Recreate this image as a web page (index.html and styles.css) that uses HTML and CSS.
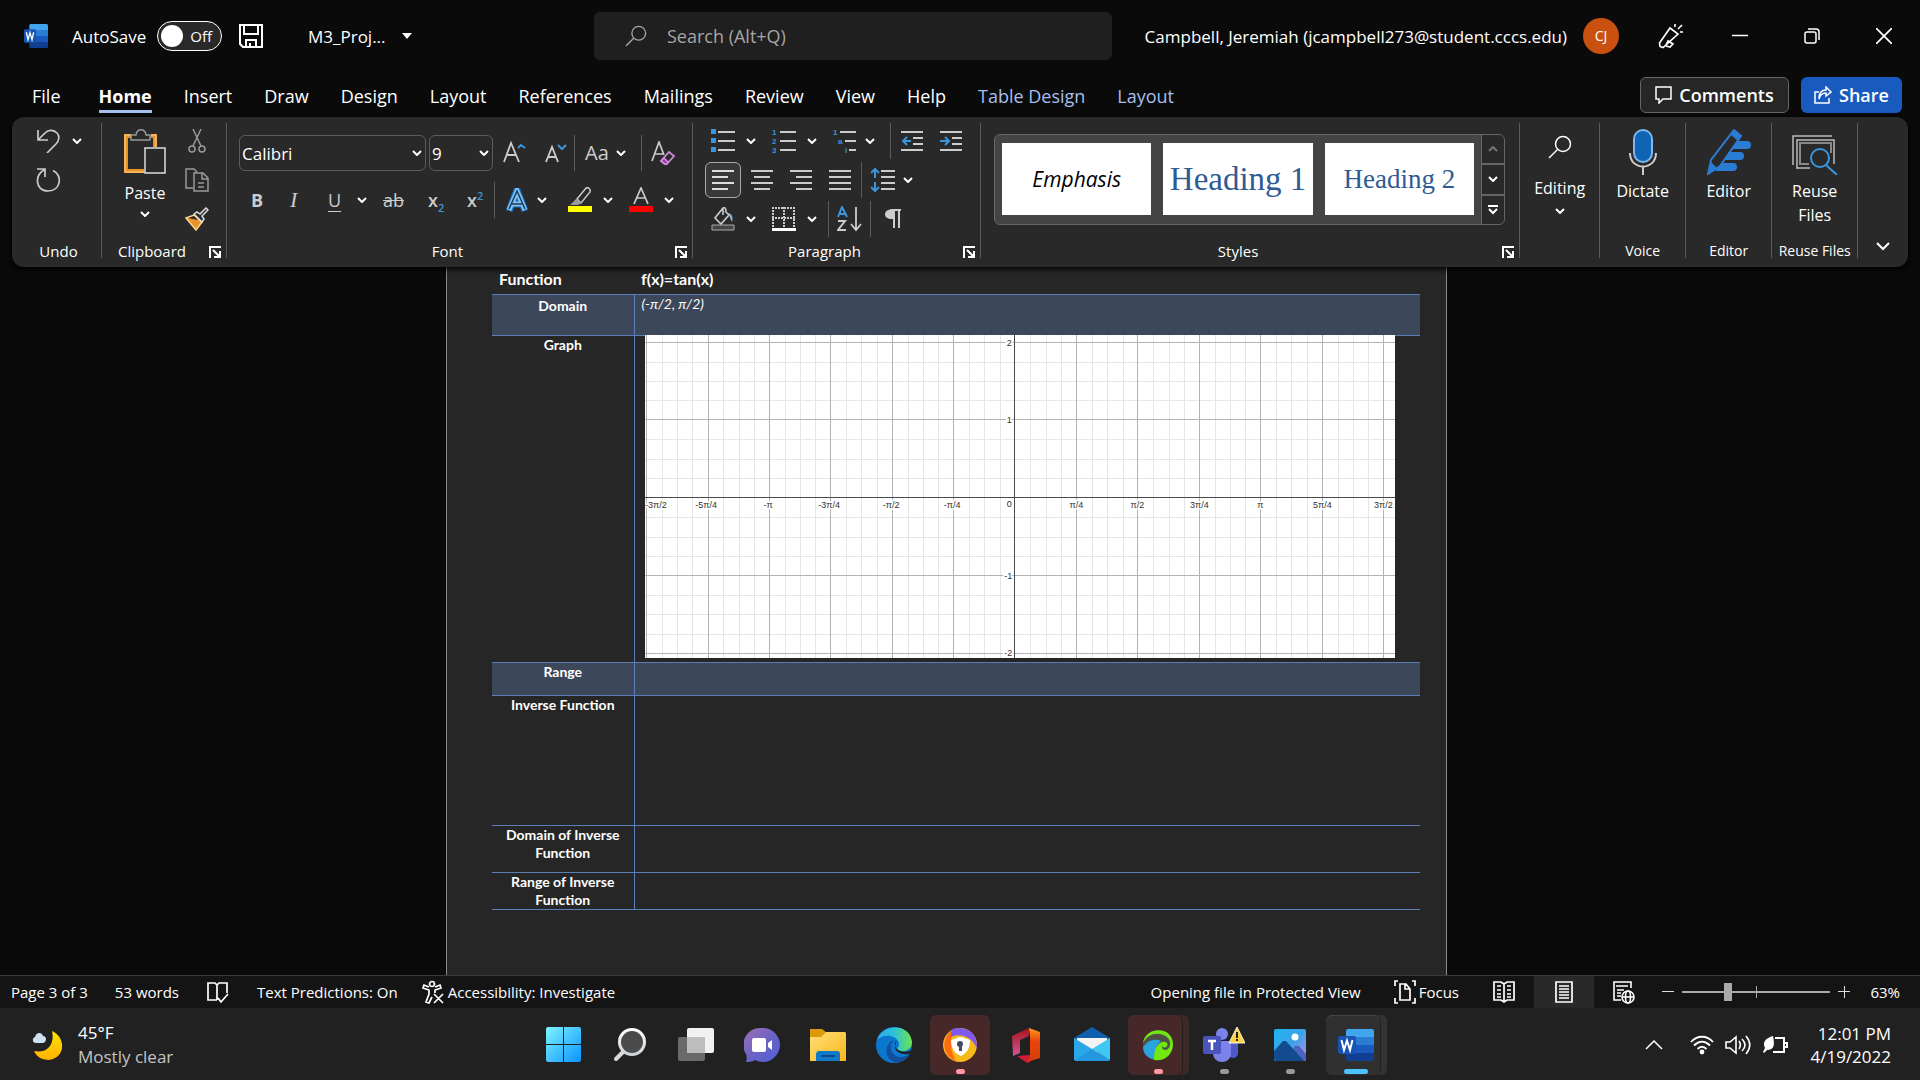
FILE: index.html
```html
<!DOCTYPE html>
<html lang="en">
<head>
<meta charset="utf-8">
<meta name="viewport" content="width=device-width, initial-scale=1">
<title>M3_Project - Word</title>
<link rel="stylesheet" href="styles.css">
</head>
<body>
<svg class="defs" aria-hidden="true">
  <defs>
    <linearGradient id="g-win" x1="0" y1="0" x2="1" y2="1"><stop offset="0" stop-color="#7ff4ff"/><stop offset="1" stop-color="#0a93ff"/></linearGradient>
    <linearGradient id="g-lens" x1="0" y1="0" x2="0" y2="1"><stop offset="0" stop-color="#fff"/><stop offset="1" stop-color="#cfd4d8"/></linearGradient>
    <linearGradient id="g-chat" x1="0" y1="0" x2="1" y2="1"><stop offset="0" stop-color="#a56eb4"/><stop offset=".5" stop-color="#6b63c4"/><stop offset="1" stop-color="#4f5fd8"/></linearGradient>
    <linearGradient id="g-folder" x1="0" y1="0" x2="1" y2="1"><stop offset="0" stop-color="#ffe07a"/><stop offset="1" stop-color="#fbb51a"/></linearGradient>
    <linearGradient id="g-edge" x1="0" y1="0" x2="1" y2="0"><stop offset="0" stop-color="#2cabe8"/><stop offset=".5" stop-color="#2cc3d5"/><stop offset="1" stop-color="#6fe34e"/></linearGradient>
    <linearGradient id="g-office" x1="0" y1="0" x2="0" y2="1"><stop offset="0" stop-color="#a51418"/><stop offset="1" stop-color="#d0589a"/></linearGradient>
    <linearGradient id="g-orange" x1="0" y1="0" x2="0" y2="1"><stop offset="0" stop-color="#ff9a1c"/><stop offset=".4" stop-color="#e8430c"/><stop offset="1" stop-color="#d63f08"/></linearGradient>
    <linearGradient id="g-photo" x1="0" y1="0" x2="1" y2="1"><stop offset="0" stop-color="#1fb4f0"/><stop offset=".5" stop-color="#3aa2ea"/><stop offset="1" stop-color="#c78be0"/></linearGradient>
    <linearGradient id="g-moon" x1="0" y1="0" x2="0" y2="1"><stop offset="0" stop-color="#ffe600"/><stop offset="1" stop-color="#ffb000"/></linearGradient>
    <symbol id="i-chev" viewBox="0 0 10 6"><path d="M1 1l4 4 4-4" fill="none" stroke="#fff" stroke-width="2"/></symbol>
    <symbol id="i-launch" viewBox="0 0 12 12"><path d="M1 12V1h11" fill="none" stroke="#fff" stroke-width="2"/><path d="M4 4l6 6M11 5v6H5" fill="none" stroke="#fff" stroke-width="2"/></symbol>
    <symbol id="i-word" viewBox="0 0 36 32">
      <path d="M10 0h24a2 2 0 0 1 2 2v6H8V2a2 2 0 0 1 2-2z" fill="#41a5ee"/><path d="M8 8h28v8H8z" fill="#2b7cd3"/><path d="M8 16h28v8H8z" fill="#185abd"/><path d="M8 24h28v6a2 2 0 0 1-2 2H10a2 2 0 0 1-2-2z" fill="#103f91"/>
      <rect x="0" y="7" width="18" height="18" rx="2" fill="#1753b3"/><path d="M3.500 11l2.500 10 3-9.500 3 9.500 2.500-10" fill="none" stroke="#fff" stroke-width="2"/>
    </symbol>
    <symbol id="i-lens" viewBox="0 0 24 24"><circle cx="15" cy="9" r="7.500" fill="none" stroke="currentColor" stroke-width="1.500"/><path d="M9.500 14.500L1 23" fill="none" stroke="currentColor" stroke-width="1.500"/></symbol>
  </defs>
</svg>

<header>
  <div class="titlebar">
    <svg class="logo" viewBox="0 0 36 32" preserveAspectRatio="none" aria-hidden="true"><use href="#i-word"/></svg>
    <label class="autosave">AutoSave
      <span class="switch"><input type="checkbox"><span>Off</span></span>
    </label>
    <button class="save" aria-label="Save"><svg width="24" height="24" viewBox="0 0 24 24" fill="none" stroke="#fff" stroke-width="2"><path d="M1 1h22v22H4l-3-3z"/><path d="M5 1v9h14V1M7 23v-7h10v7M11 19v4"/></svg></button>
    <button class="docname">M3_Proj... <svg width="10" height="6" viewBox="0 0 10 6"><path d="M0 0h10L5 6z" fill="#fff"/></svg></button>
    <label class="search"><svg width="22" height="22" aria-hidden="true"><use href="#i-lens"/></svg><input type="search" placeholder="Search (Alt+Q)" aria-label="Search"></label>
    <div class="account"><span>Campbell, Jeremiah (jcampbell273@student.cccs.edu)</span><span class="avatar">CJ</span></div>
    <button class="pen" aria-label="Coming soon"><svg width="26" height="26" viewBox="0 0 26 26" fill="none" stroke="#fff" stroke-width="1.600"><path d="M1.500 20L12 5l8 6L5 24.500l-3-1zM8 22l2-4 5 3-3 3-4-1"/><path d="M17 1v3M24 2l-4 4M22 9h3"/></svg></button>
    <div class="winbtns">
      <button aria-label="Minimize"><svg width="16" height="16" viewBox="0 0 16 16"><path d="M0 7.500h16" stroke="#fff" stroke-width="1.500"/></svg></button>
      <button aria-label="Restore"><svg width="16" height="16" viewBox="0 0 16 16" fill="none" stroke="#fff" stroke-width="1.500"><rect x="1" y="4" width="11" height="11" rx="2"/><path d="M4 1h8a3 3 0 0 1 3 3v8"/></svg></button>
      <button aria-label="Close"><svg width="16" height="16" viewBox="0 0 16 16"><path d="M0 0l16 16M16 0L0 16" stroke="#fff" stroke-width="1.700"/></svg></button>
    </div>
  </div>
  <div class="tabbar">
    <nav class="tabs">
      <a href="#file" class="file">File</a><a href="#home" class="active">Home</a><a href="#insert">Insert</a><a href="#draw">Draw</a><a href="#design">Design</a><a href="#layout">Layout</a><a href="#references">References</a><a href="#mailings">Mailings</a><a href="#review">Review</a><a href="#view">View</a><a href="#help">Help</a><a href="#table-design" class="context">Table Design</a><a href="#table-layout" class="context">Layout</a>
    </nav>
    <button class="comments"><svg width="17" height="18" viewBox="0 0 17 18" fill="none" stroke="#fff" stroke-width="1.500"><path d="M1 1h15v12H8l-4 4v-4H1z"/></svg>Comments</button>
    <button class="share"><svg width="18" height="18" viewBox="0 0 18 18" fill="none" stroke="#fff" stroke-width="1.500"><path d="M5 6H1v11h14v-5M12 1l5 5-5 4V7c-4 0-6 2-7 6 0-6 2-9 7-9z"/></svg>Share</button>
  </div>

  <div class="ribbon">
    <section class="group g-undo">
      <div class="tools">
        <div class="undo-row">
          <button aria-label="Undo"><svg width="24" height="24" viewBox="0 0 24 24" fill="none" stroke="#ccc" stroke-width="1.700"><path d="M2 1v10h10M2 11l7-7c4-4 9-3 12 0s2 8-1 11l-9 9"/></svg></button>
          <button aria-label="Undo history"><svg width="10" height="6"><use href="#i-chev"/></svg></button>
        </div>
        <button aria-label="Redo"><svg width="24" height="24" viewBox="0 0 24 24" fill="none" stroke="#ccc" stroke-width="1.700"><path d="M1 1h8v8M9 1.500C-2 6-1 23 12 23S27 7 17 2.500"/></svg></button>
      </div>
      <h2>Undo</h2>
    </section>

    <section class="group g-clip">
      <div class="tools">
        <button class="big paste"><svg width="42" height="46" viewBox="0 0 42 46"><path d="M7 7H2v35h18M27 7h4v11" fill="none" stroke="#e8932a" stroke-width="4"/><path d="M8 6H1v37h20M27 6h5v12" fill="none" stroke="#ffd68a" stroke-width="1"/><path d="M7 11V6h5c1-7 9-7 10 0h4v5z" fill="#292929" stroke="#999" stroke-width="1.500"/><rect x="21" y="19" width="20" height="25" fill="#292929" stroke="#ddd" stroke-width="1.500"/></svg>Paste<svg class="down" width="10" height="6"><use href="#i-chev"/></svg></button>
        <div class="stack">
          <button aria-label="Cut"><svg width="24" height="24" viewBox="0 0 24 24" fill="none" stroke="#999" stroke-width="1.500"><path d="M8 0l8 17M16 0L8 17"/><circle cx="7" cy="20" r="3"/><circle cx="17" cy="20" r="3"/></svg></button>
          <button aria-label="Copy"><svg width="24" height="24" viewBox="0 0 24 24" fill="none" stroke="#999" stroke-width="1.500"><path d="M8 20H1V1h8l3 3M9 5h9l5 5v13H9zM17 5v6h6M13 15h6M13 19h6"/></svg></button>
          <button aria-label="Format Painter"><svg width="24" height="24" viewBox="0 0 24 24"><path d="M1 11l8-3 8 7-6 8z" fill="#e8932a" stroke="#ffd68a" stroke-width="1.500"/><path d="M3 11l6-2 4 4z" fill="#292929"/><path d="M9 7l3-2 3 2 6-6 2 2-6 6 2 3-2 3z" fill="#292929" stroke="#ddd" stroke-width="1.500"/></svg></button>
        </div>
      </div>
      <h2>Clipboard</h2>
      <button class="launch" aria-label="Clipboard settings"><svg width="12" height="12"><use href="#i-launch"/></svg></button>
    </section>

    <section class="group g-font">
      <div class="tools">
        <div class="row f1">
          <span class="combo name"><select aria-label="Font"><option>Calibri</option></select><svg width="10" height="6"><use href="#i-chev"/></svg></span>
          <span class="combo size"><select aria-label="Font size"><option>9</option></select><svg width="10" height="6"><use href="#i-chev"/></svg></span>
          <button aria-label="Increase font size"><svg width="24" height="24" viewBox="0 0 24 24" fill="none" stroke="#ccc" stroke-width="1.800"><path d="M1 21L8 2l8 19M4 14h9"/><path d="M15 7l3-3 4 3" stroke="#3a96dd" stroke-width="2"/></svg></button>
          <button aria-label="Decrease font size"><svg width="24" height="24" viewBox="0 0 24 24" fill="none" stroke="#ccc" stroke-width="1.800"><path d="M1 21L7 6l6 15M3 16h8"/><path d="M13 4l4 4 4-4" stroke="#3a96dd" stroke-width="2"/></svg></button>
          <i class="sep"></i>
          <button class="glyph aa" aria-label="Change case">Aa</button>
          <button aria-label="Case options"><svg width="10" height="6"><use href="#i-chev"/></svg></button>
          <i class="sep"></i>
          <button aria-label="Clear formatting"><svg width="24" height="24" viewBox="0 0 24 24" fill="none" stroke="#ccc" stroke-width="1.700"><path d="M1 20L8 1l5 13M4 13h8"/><path d="M18 11l5 4-8 9-5-4z" stroke="#d08ad8"/><path d="M13 17l4 4-2 3-5-4z" fill="#9c3aa8" stroke="#d08ad8"/></svg></button>
        </div>
        <div class="row f2">
          <button class="glyph b" aria-label="Bold">B</button>
          <button class="glyph it" aria-label="Italic">I</button>
          <button class="glyph u" aria-label="Underline">U</button>
          <button aria-label="Underline style"><svg width="10" height="6"><use href="#i-chev"/></svg></button>
          <button class="glyph st" aria-label="Strikethrough">ab</button>
          <button class="glyph x" aria-label="Subscript">x<sub>2</sub></button>
          <button class="glyph x" aria-label="Superscript">x<sup>2</sup></button>
          <i class="sep"></i>
          <button aria-label="Text effects"><svg width="24" height="24" viewBox="0 0 24 24" fill="none"><path d="M4 23L12 2l8 21M7 16h10" stroke="#0f6cbd" stroke-width="7"/><path d="M4 22L12 3l8 19M7 16h10" stroke="#83c0f2" stroke-width="5"/><path d="M4 21L12 3l8 18M7 16h10" stroke="#1d3b57" stroke-width="1.500"/></svg></button>
          <button aria-label="Text effect options"><svg width="10" height="6"><use href="#i-chev"/></svg></button>
          <button aria-label="Highlight"><svg width="24" height="26" viewBox="0 0 24 26"><path d="M9 12l9-11c2-1 5 1 4 4l-9 11z" fill="none" stroke="#ccc" stroke-width="1.500"/><path d="M8 12l6 4-4 2H2z" fill="#999"/><path d="M0 19h24v6H0z" fill="#ff0"/></svg></button>
          <button aria-label="Highlight colors"><svg width="10" height="6"><use href="#i-chev"/></svg></button>
          <button aria-label="Font color"><svg width="24" height="26" viewBox="0 0 24 26"><path d="M5 17l7-16 7 16M7 11h10" fill="none" stroke="#ccc" stroke-width="1.700"/><path d="M0 19h24v6H0z" fill="red"/></svg></button>
          <button aria-label="Font colors"><svg width="10" height="6"><use href="#i-chev"/></svg></button>
        </div>
      </div>
      <h2>Font</h2>
      <button class="launch" aria-label="Font settings"><svg width="12" height="12"><use href="#i-launch"/></svg></button>
    </section>

    <section class="group g-para">
      <div class="tools">
        <div class="row p1">
          <button aria-label="Bullets"><svg width="24" height="24" viewBox="0 0 24 24"><path d="M0 0h5v5H0zM0 9h5v5H0zM0 18h5v5H0z" fill="#3a96dd"/><path d="M7 2h17v2H7zM7 11h17v2H7zM7 20h17v2H7z" fill="#ccc"/></svg></button>
          <button aria-label="Bullet library"><svg width="10" height="6"><use href="#i-chev"/></svg></button>
          <button aria-label="Numbering"><svg width="24" height="28" viewBox="0 -2 24 28"><g class="num"><text x="0" y="6">1</text><text x="0" y="15">2</text><text x="0" y="24">3</text></g><path d="M8 2h16v2H8zM8 11h16v2H8zM8 20h16v2H8z" fill="#ccc"/></svg></button>
          <button aria-label="Number library"><svg width="10" height="6"><use href="#i-chev"/></svg></button>
          <button aria-label="Multilevel list"><svg width="24" height="28" viewBox="0 -2 24 28"><g class="num"><text x="0" y="6">1</text><text x="5" y="15">a</text><text x="12" y="24">i</text></g><path d="M7 2h16v2H7zM12 11h11v2H12zM16 20h7v2h-7z" fill="#ccc"/></svg></button>
          <button aria-label="List library"><svg width="10" height="6"><use href="#i-chev"/></svg></button>
          <i class="sep"></i>
          <button aria-label="Decrease indent"><svg width="24" height="24" viewBox="0 0 24 24"><path d="M0 2h22v2H0zM12 8h10v2H12zM12 14h10v2H12zM0 20h22v2H0z" fill="#ccc"/><path d="M10 12H2M6 8l-4 4 4 4" fill="none" stroke="#3a96dd" stroke-width="2"/></svg></button>
          <button aria-label="Increase indent"><svg width="24" height="24" viewBox="0 0 24 24"><path d="M0 2h22v2H0zM12 8h10v2H12zM12 14h10v2H12zM0 20h22v2H0z" fill="#ccc"/><path d="M0 12h9M5 8l4 4-4 4" fill="none" stroke="#3a96dd" stroke-width="2"/></svg></button>
        </div>
        <div class="row p2">
          <button class="pressed" aria-label="Align left"><svg width="22" height="24" viewBox="0 0 22 24"><path d="M0 2h22v2H0zM0 8h16v2H0zM0 14h22v2H0zM0 20h16v2H0z" fill="#ddd"/></svg></button>
          <button aria-label="Center"><svg width="22" height="24" viewBox="0 0 22 24"><path d="M0 2h22v2H0zM3 8h16v2H3zM0 14h22v2H0zM3 20h16v2H3z" fill="#ccc"/></svg></button>
          <button aria-label="Align right"><svg width="22" height="24" viewBox="0 0 22 24"><path d="M0 2h22v2H0zM6 8h16v2H6zM0 14h22v2H0zM6 20h16v2H6z" fill="#ccc"/></svg></button>
          <button aria-label="Justify"><svg width="22" height="24" viewBox="0 0 22 24"><path d="M0 2h22v2H0zM0 8h22v2H0zM0 14h22v2H0zM0 20h22v2H0z" fill="#ccc"/></svg></button>
          <i class="sep"></i>
          <button aria-label="Line spacing"><svg width="24" height="24" viewBox="0 0 24 24"><path d="M10 2h14v2H10zM10 8h14v2H10zM10 14h14v2H10zM10 20h14v2H10z" fill="#ccc"/><path d="M4 1v9M4 14v9M0 5l4-4 4 4M0 19l4 4 4-4" fill="none" stroke="#3a96dd" stroke-width="2"/></svg></button>
          <button aria-label="Spacing options"><svg width="10" height="6"><use href="#i-chev"/></svg></button>
        </div>
        <div class="row p3">
          <button aria-label="Shading"><svg width="24" height="24" viewBox="0 0 24 24"><path d="M12 1L4 11l6 6 8-9-4-4M12 8V1c2-1 3 1 3 3" fill="none" stroke="#ccc" stroke-width="1.600"/><path d="M17 6c5 1 5 5 4 9-2-3-2-6-4-9z" fill="#83b9e6"/><path d="M1 18h22v5H1z" fill="#444" stroke="#aaa"/></svg></button>
          <button aria-label="Shading colors"><svg width="10" height="6"><use href="#i-chev"/></svg></button>
          <button aria-label="Borders"><svg width="24" height="24" viewBox="0 0 24 24"><path d="M0 1h23M0 11h23M1 0v20M12 0v20M22 0v20" stroke="#ccc" stroke-width="2" stroke-dasharray="2 1"/><path d="M0 21h24v3H0z" fill="#fff"/></svg></button>
          <button aria-label="Border options"><svg width="10" height="6"><use href="#i-chev"/></svg></button>
          <i class="sep"></i>
          <button aria-label="Sort"><svg width="25" height="26" viewBox="0 0 25 26" fill="none"><path d="M1 11L5 1l5 10M3 8h5" stroke="#3a96dd" stroke-width="2"/><path d="M1 15h7L1 24h8" stroke="#ccc" stroke-width="2"/><path d="M19 1v23M14 18l5 6 5-6" stroke="#ccc" stroke-width="1.800"/></svg></button>
          <i class="sep"></i>
          <button aria-label="Show marks"><svg width="16" height="20" viewBox="0 0 16 20"><path d="M7 0h9v2h-1v17h-2V2h-3v17H8v-9C-2 11-3 1 7 0z" fill="#ccc"/></svg></button>
        </div>
      </div>
      <h2>Paragraph</h2>
      <button class="launch" aria-label="Paragraph settings"><svg width="12" height="12"><use href="#i-launch"/></svg></button>
    </section>

    <section class="group g-styles">
      <div class="tools">
        <div class="gallery">
          <button class="card emphasis">Emphasis</button>
          <button class="card h1">Heading 1</button>
          <button class="card h2">Heading 2</button>
          <div class="scroll">
            <button aria-label="Previous row" class="dim"><svg width="10" height="6" viewBox="0 0 10 6"><path d="M1 5l4-4 4 4" fill="none" stroke="#777" stroke-width="2"/></svg></button>
            <button aria-label="Next row"><svg width="10" height="6"><use href="#i-chev"/></svg></button>
            <button aria-label="All styles"><svg width="10" height="10" viewBox="0 0 10 10"><path d="M0 1h10M1 4l4 4 4-4" fill="none" stroke="#fff" stroke-width="2"/></svg></button>
          </div>
        </div>
      </div>
      <h2>Styles</h2>
      <button class="launch" aria-label="Styles settings"><svg width="12" height="12"><use href="#i-launch"/></svg></button>
    </section>

    <section class="group g-edit">
      <button class="big editing"><svg width="24" height="24"><use href="#i-lens"/></svg><span>Editing</span><svg class="down" width="10" height="6"><use href="#i-chev"/></svg></button>
    </section>
    <section class="group g-side">
      <button class="big"><svg width="28" height="46" viewBox="0 0 28 46"><rect x="5" y="1" width="18" height="32" rx="9" fill="#0f64b4" stroke="#7fb8ec" stroke-width="2"/><path d="M1 24c0 18 26 18 26 0M14 38v8" fill="none" stroke="#ccc" stroke-width="2"/></svg>Dictate</button>
      <h2>Voice</h2>
    </section>
    <section class="group g-side">
      <button class="big"><svg width="46" height="46" viewBox="0 0 46 46"><path d="M27 12h14a4 4 0 0 1 0 8H26zM22 23h12a4 4 0 0 1 0 8H18zM17 34h10a4 4 0 0 1 0 8H9z" fill="#2b7cd3"/><path d="M28 1l7 6-21 30-12 8 3-14z" fill="#292929" stroke="#2b7cd3" stroke-width="2"/><path d="M28 1l7 6-3 5-7-6zM5 33l6 6-9 6z" fill="#2b7cd3"/></svg>Editor</button>
      <h2>Editor</h2>
    </section>
    <section class="group g-side">
      <button class="big"><svg width="46" height="46" viewBox="0 0 46 46" fill="none" stroke="#bbb" stroke-width="1.500"><path d="M1 36V7h39M5 40V11h37v24M18 39H5"/><path d="M17 35H8V14h31v10" stroke="#888" stroke-width="2"/><circle cx="28" cy="29" r="9" stroke="#3a96dd" stroke-width="2"/><path d="M34 36l11 10" stroke="#3a96dd" stroke-width="2"/></svg>Reuse<br>Files</button>
      <h2>Reuse Files</h2>
    </section>
    <button class="collapse" aria-label="Collapse ribbon"><svg width="14" height="9" viewBox="0 0 14 9"><path d="M1 1l6 6 6-6" fill="none" stroke="#fff" stroke-width="2"/></svg></button>
  </div>
</header>

<main>
  <article class="page">
    <table>
      <thead><tr><th scope="col">Function</th><th scope="col">f(x)=tan(x)</th></tr></thead>
      <tbody>
        <tr class="r-domain"><th scope="row">Domain</th><td><em>(-π/2, π/2)</em></td></tr>
        <tr class="r-graph"><th scope="row">Graph</th><td>
          <svg class="graph" viewBox="0 0 750 323" role="img" aria-label="Empty coordinate grid">
            <rect width="750" height="323" fill="#fff"/>
            <g fill="none" shape-rendering="crispEdges">
              <path stroke="#e6e6e6" d="M17.500 0v323M32.500 0v323M47.500 0v323M78.500 0v323M94.500 0v323M109.500 0v323M140.500 0v323M155.500 0v323M170.500 0v323M201.500 0v323M216.500 0v323M232.500 0v323M263.500 0v323M278.500 0v323M293.500 0v323M324.500 0v323M339.500 0v323M355.500 0v323M385.500 0v323M401.500 0v323M416.500 0v323M447.500 0v323M462.500 0v323M478.500 0v323M508.500 0v323M524.500 0v323M539.500 0v323M570.500 0v323M585.500 0v323M600.500 0v323M631.500 0v323M646.500 0v323M662.500 0v323M693.500 0v323M708.500 0v323M723.500 0v323M0 27.500h750M0 46.500h750M0 65.500h750M0 104.500h750M0 124.500h750M0 143.500h750M0 182.500h750M0 202.500h750M0 221.500h750M0 260.500h750M0 279.500h750M0 299.500h750"/>
              <path stroke="#b3b3b3" d="M1.500 0v323M63.500 0v323M124.500 0v323M185.500 0v323M247.500 0v323M308.500 0v323M431.500 0v323M492.500 0v323M554.500 0v323M615.500 0v323M677.500 0v323M738.500 0v323M0 7.500h750M0 84.500h750M0 240.500h750M0 318.500h750"/>
              <path stroke="#4a4a4a" d="M369.500 0v323M0 162.500h750"/>
            </g>
            <g class="ticks">
              <text x="0" y="173" class="first">-3π/2</text><text x="61" y="173">-5π/4</text><text x="123" y="173">-π</text><text x="184" y="173">-3π/4</text><text x="246" y="173">-π/2</text><text x="307" y="173">-π/4</text>
              <text x="431" y="173">π/4</text><text x="492" y="173">π/2</text><text x="554" y="173">3π/4</text><text x="615" y="173">π</text><text x="677" y="173">5π/4</text><text x="738" y="173">3π/2</text>
              <text x="364" y="172">0</text><text x="364" y="11">2</text><text x="364" y="88">1</text><text x="363" y="244">-1</text><text x="363" y="321">-2</text>
            </g>
          </svg>
        </td></tr>
        <tr class="r-range"><th scope="row">Range</th><td></td></tr>
        <tr class="r-inverse"><th scope="row">Inverse Function</th><td></td></tr>
        <tr class="r-dominv"><th scope="row">Domain of Inverse Function</th><td></td></tr>
        <tr class="r-rangeinv"><th scope="row">Range of Inverse Function</th><td></td></tr>
      </tbody>
    </table>
  </article>
</main>

<footer>
  <div class="statusbar">
    <span>Page 3 of 3</span>
    <span>53 words</span>
    <svg width="24" height="24" viewBox="0 0 24 24" fill="none" stroke="#fff" stroke-width="1.700" role="img" aria-label="Proofing"><path d="M11 20H2V3h7l2 2 2-2h8v10M11 5v15M12 18l3 4 7-8"/></svg>
    <span>Text Predictions: On</span>
    <span class="with-icon access"><svg width="24" height="24" viewBox="0 0 24 24" fill="none" stroke="#fff" stroke-width="1.700"><circle cx="11" cy="4" r="2.500"/><path d="M8 7L3 5 2 8l6 2v4L5 22l3 1 3-6M14 7l5-2 1 3-6 2v3M13 14l9 9M22 14l-9 9"/></svg>Accessibility: Investigate</span>
    <span class="push">Opening file in Protected View</span>
    <button class="with-icon focus"><svg width="22" height="24" viewBox="0 0 22 24" fill="none" stroke="#fff" stroke-width="1.700"><path d="M4 1H1v5M1 18v5h3M18 1h3v5M21 18v5h-3M6 4h6l4 5v11H6zM11 4v5h5"/></svg>Focus</button>
    <div class="views">
      <button aria-label="Read mode"><svg width="22" height="24" viewBox="0 0 22 24" fill="none" stroke="#fff" stroke-width="1.700"><path d="M11 4L8 2H1v18h7l3 2 3-2h7V2h-7zM11 4v18M4 6h4M4 10h4M4 14h4M14 6h4M14 10h4M14 14h4M4 17h4M14 17h4"/></svg></button>
      <button class="on" aria-label="Print layout"><svg width="18" height="24" viewBox="0 0 18 24" fill="none" stroke="#fff" stroke-width="1.700"><path d="M1 2h16v20H1zM4 6h10M4 9h10M4 12h10M4 15h10M4 18h10"/></svg></button>
      <button aria-label="Web layout"><svg width="24" height="24" viewBox="0 0 24 24" fill="none" stroke="#fff" stroke-width="1.600"><path d="M9 20H2V2h17v6M4 6h12M5 10h7M5 13h4M5 16h4"/><circle cx="16" cy="17" r="6"/><ellipse cx="16" cy="17" rx="2.500" ry="6"/><path d="M10 17h12"/></svg></button>
    </div>
    <div class="zoom">
      <button aria-label="Zoom out"><svg width="12" height="12" viewBox="0 0 12 12"><path d="M0 5.500h12" stroke="#ddd"/></svg></button>
      <span class="slider"><input type="range" min="10" max="100" value="37" aria-label="Zoom"></span>
      <button aria-label="Zoom in"><svg width="12" height="12" viewBox="0 0 12 12"><path d="M0 5.500h12M6.500 0v12" stroke="#ddd"/></svg></button>
      <span>63%</span>
    </div>
  </div>

  <div class="taskbar">
    <button class="weather"><svg width="32" height="32" viewBox="0 0 32 32"><path d="M20 2c14 6 14 27-3 29C9 31 4 27 2 22c14 3 21-8 18-20z" fill="url(#g-moon)"/><path d="M4 14c-4 0-4-5-1-6 1-5 7-5 8-1 4 0 4 6 0 7z" fill="#cfe0ee"/></svg><span>45°F<br><small>Mostly clear</small></span></button>
    <div class="apps">
      <button aria-label="Start"><svg width="36" height="36" viewBox="0 0 36 36"><path d="M2 0h15v17H0V2a2 2 0 0 1 2-2zM18 0h15a2 2 0 0 1 2 2v15H18zM0 18h17v17H2a2 2 0 0 1-2-2zM18 18h17v15a2 2 0 0 1-2 2H18z" fill="url(#g-win)"/></svg></button>
      <button aria-label="Search"><svg width="36" height="36" viewBox="0 0 36 36"><path d="M12 24l-8 8" stroke="#d5d9dc" stroke-width="4" stroke-linecap="round"/><circle cx="20" cy="15" r="12.500" fill="#4b4b4b" stroke="url(#g-lens)" stroke-width="3"/></svg></button>
      <button aria-label="Task View"><svg width="36" height="36" viewBox="0 0 36 36"><rect x="9" y="1" width="27" height="25" rx="2" fill="#f1f1f1"/><rect x="0" y="10" width="27" height="24" rx="2" fill="#777" opacity=".85"/><path d="M9 10h18v16H9z" fill="#bdbdbd"/></svg></button>
      <button aria-label="Chat"><svg width="36" height="36" viewBox="0 0 36 36"><path d="M18 1a17 17 0 1 1-7 32c-3 2-6 2-9 2 1-3 1-5 0-8A17 17 0 0 1 18 1z" fill="url(#g-chat)"/><rect x="8" y="11" width="14" height="14" rx="2" fill="#fff"/><path d="M24 16l4-3v10l-4-3z" fill="#fff"/></svg></button>
      <button aria-label="File Explorer"><svg width="36" height="36" viewBox="0 0 36 36"><path d="M0 2h12l4 3h18v8H0z" fill="#dc9a0b"/><path d="M0 10h11l5-5h19l1 1v28H0z" fill="url(#g-folder)"/><path d="M6 34v-7c0-2 2-3 3-3h18c2 0 3 1 3 3v7z" fill="#0f7ac8"/><path d="M11 29h14" stroke="#0a4a86" stroke-width="2"/></svg></button>
      <button aria-label="Edge"><svg width="36" height="36" viewBox="0 0 36 36"><circle cx="18" cy="18" r="18" fill="#0b78d0"/><path d="M1 13C5-3 34-5 36 15c0 8-8 11-14 8-2-2 2-3 1-7-3-9-16-9-22-3z" fill="url(#g-edge)"/><path d="M19 13c-8 4-4 17 5 17 5 0 8-2 10-4-4 11-19 13-23 2-2-6 1-14 8-15z" fill="#124f9c"/><path d="M20 14c-4 6 3 13 14 10l2-3-1 5c-6 3-16 0-16-6 0-3 2-4 1-6z" fill="#202020"/></svg></button>
      <button class="red" aria-label="Secure Browser"><svg width="34" height="34" viewBox="0 0 34 34"><circle cx="17" cy="17" r="17" fill="#f5b91a"/><path d="M10 2A17 17 0 0 0 13 33c-5-9-7-18-3-31z" fill="#ff6a13"/><path d="M8 2c9-5 27-1 26 18C28 8 17 5 8 9z" fill="#8258f2"/><path d="M8 12c6-1 6-3 9-3s6 2 10 3c0 8-3 13-9 16-6-2-10-8-10-16z" fill="#fff"/><circle cx="17" cy="16" r="3" fill="#434a63"/><path d="M16 17h3v6h-3z" fill="#434a63"/></svg></button>
      <button aria-label="Office"><svg width="36" height="36" viewBox="0 0 36 36"><path d="M4 9L21 1v8l-9 4v13l-7 3z" fill="url(#g-office)"/><path d="M9 29l13-1v7l-3 1z" fill="#d11c38"/><path d="M21 1l11 4v26l-13 4 3-4V8z" fill="url(#g-orange)"/></svg></button>
      <button aria-label="Mail"><svg width="36" height="36" viewBox="0 0 36 36"><path d="M0 11L18 0l18 11v12H0z" fill="#0f5fae"/><path d="M3 11h30v10L18 27 3 19z" fill="#f4f4f4"/><path d="M0 11l36 22H0z" fill="#29a7e8"/><path d="M36 11v22L18 22z" fill="#40c8f4"/><path d="M18 22l18 12H0z" fill="#2597df"/></svg></button>
      <button class="red many" aria-label="Web Browser"><svg width="32" height="32" viewBox="0 0 32 32"><circle cx="16" cy="16" r="15" fill="#4e5148"/><path d="M1 18c5-7 12-9 18-6-6 5-7 12-5 19C6 30 1 25 1 18z" fill="#29a4df"/><path d="M12 31c0-8 1-13 6-17 5-3 9 0 7 3-1 2-4 2-5 0-1 5 7 6 8-1 1-6-4-10-10-11C11 4 5 7 1 14 3-2 30-4 31 15c0 10-8 18-19 16z" fill="#72e611"/></svg></button>
      <button class="running" aria-label="Teams"><svg width="42" height="36" viewBox="0 0 42 36"><circle cx="19" cy="7" r="6" fill="#7b83eb"/><path d="M26 15h9v11c0 6-7 6-9 3z" fill="#5059c9"/><path d="M10 14h18v12c0 12-18 12-18 0z" fill="#7b83eb"/><rect x="0" y="9" width="18" height="18" rx="2" fill="#4b53bc"/><path d="M5 14h8M9 14v9" stroke="#fff" stroke-width="2.500"/><path d="M34 0l8 16H26z" fill="#ffd43a" stroke="#f2f2f2"/><path d="M34 5v6M34 12v2" stroke="#222" stroke-width="2"/></svg></button>
      <button class="running" aria-label="Photos"><svg width="32" height="32" viewBox="0 0 32 32"><rect width="32" height="32" rx="2" fill="url(#g-photo)"/><circle cx="21" cy="8" r="3.500" fill="#fff"/><path d="M16 24l5-7h4l7 8v5l-2 2H12z" fill="#4a63c0"/><path d="M0 22l9-10h3l18 20H2l-2-2z" fill="#124c8e"/></svg></button>
      <button class="current many" aria-label="Word"><svg width="36" height="32"><use href="#i-word"/></svg></button>
    </div>
    <div class="tray">
      <button aria-label="Hidden icons"><svg width="18" height="10" viewBox="0 0 18 10" fill="none" stroke="#fff" stroke-width="1.500"><path d="M1 9l8-8 8 8"/></svg></button>
      <button class="net" aria-label="Network, volume and battery">
        <svg width="24" height="20" viewBox="0 0 24 20" fill="none" stroke="#fff" stroke-width="1.800"><path d="M1 7c6-7 16-7 22 0M4 10.500c5-5 11-5 16 0M7.500 14c3-3 6-3 9 0"/><circle cx="12" cy="17" r="1.500" fill="#fff"/></svg>
        <svg width="26" height="20" viewBox="0 0 26 20" fill="none" stroke="#fff" stroke-width="1.600"><path d="M1 7h4l6-5v16l-6-5H1zM14 6c2 3 2 5 0 8M17 4c4 4 4 8 0 12M21 1c5 6 5 12 0 18"/></svg>
        <svg width="26" height="20" viewBox="0 0 26 20"><path d="M13 3h9v14H11M23 8h2v4h-2" fill="none" stroke="#fff" stroke-width="2"/><path d="M11 1c2 9 1 14-6 14l-3 3-1-1 2-4C0 7 4 3 11 1z" fill="#fff"/></svg>
      </button>
      <button class="clock">12:01 PM<br>4/19/2022</button>
    </div>
  </div>
</footer>
</body>
</html>
```
FILE: styles.css
```css
* { box-sizing: border-box; }
html, body { height: 100%; }
body {
  margin: 0;
  display: flex;
  flex-direction: column;
  overflow: hidden;
  background: #0a0a0a;
  color: #fff;
  font-family: "Open Sans", "Noto Sans", sans-serif;
  font-size: 17px;
}
button, input, select {
  font: inherit;
  color: inherit;
  background: none;
  border: 0;
  padding: 0;
  margin: 0;
}
svg { display: block; flex: none; }
h2 { margin: 0; font-weight: 400; }
a { color: inherit; text-decoration: none; }
.defs { position: absolute; width: 0; height: 0; }
header, footer { flex: none; }

/* title bar */
.titlebar { display: flex; align-items: center; height: 72px; padding-left: 24px; }
.logo { width: 24px; height: 24px; margin-right: 24px; }
.autosave { display: flex; align-items: center; gap: 8px; width: 150px; justify-content: space-between; white-space: nowrap; }
.switch { position: relative; width: 65px; height: 30px; font-size: 15px; line-height: 30px; }
.switch input {
  appearance: none;
  display: block;
  width: 65px;
  height: 30px;
  padding: 3px;
  border: 1px solid #fff;
  border-radius: 15px;
  background: #292929;
}
.switch input::before { content: ""; display: block; width: 22px; height: 22px; border-radius: 50%; background: #fff; }
.switch span { position: absolute; right: 10px; top: 0; }
.save { margin-left: 17px; }
.docname { display: flex; align-items: center; gap: 16px; width: 103px; justify-content: space-between; margin-left: 45px; white-space: nowrap; }
.search {
  display: flex;
  align-items: center;
  gap: 20px;
  flex: 0 1 518px;
  height: 48px;
  margin-left: 183px;
  padding-left: 31px;
  border-radius: 6px;
  background: #1f1f1f;
  color: #a6a6a6;
}
.search input { flex: 1; min-width: 0; font-size: 18px; outline: 0; }
.search input::placeholder { color: #a6a6a6; opacity: 1; }
.account { display: flex; align-items: center; justify-content: flex-end; gap: 16px; margin-left: auto; white-space: nowrap; }
.avatar { width: 36px; height: 36px; border-radius: 50%; background: #ca5010; font-size: 14px; line-height: 36px; text-align: center; }
.pen { margin-left: 39px; }
.winbtns { display: flex; margin-left: 20px; }
.winbtns button { width: 72px; height: 48px; display: grid; place-items: center; }

/* tab strip */
.tabbar { display: flex; align-items: center; height: 45px; padding: 0 18px 0 32px; font-size: 18px; }
.tabs { display: flex; gap: 32px; flex: 1; padding-top: 3px; line-height: 34px; white-space: nowrap; }
.tabs .file { margin-right: 6px; }
.tabs .active { font-weight: 700; box-shadow: inset 0 -3px #a6c1ee; }
.tabs .context { color: #a6bfee; }
.comments, .share { display: flex; align-items: center; justify-content: center; gap: 7px; height: 36px; border-radius: 6px; font-weight: 600; }
.comments { width: 149px; border: 1px solid #666; background: #262626; }
.share { width: 101px; margin-left: 12px; background: #185abd; }

/* ribbon */
.ribbon {
  position: relative;
  display: flex;
  height: 150px;
  margin: 0 12px;
  padding: 6px 0 9px;
  border-radius: 12px;
  background: #292929;
  box-shadow: 0 2px 6px #000;
}
.group { position: relative; display: flex; flex-direction: column; flex: none; border-right: 1px solid #5c5c5c; }
.group .tools { flex: 1; }
.group h2 { font-size: 15px; line-height: 14px; text-align: center; white-space: nowrap; }
.launch { position: absolute; right: 5px; bottom: 0; }
.g-undo { width: 90px; }
.g-undo .tools { display: flex; flex-direction: column; align-items: flex-start; gap: 15px; padding: 6px 0 0 24px; }
.g-undo h2 { padding-left: 4px; }
.undo-row { display: flex; align-items: center; gap: 12px; }
.g-clip { width: 125px; }
.g-clip .tools { display: flex; padding-left: 21px; gap: 18px; }
.g-clip h2, .g-font h2, .g-para h2, .g-styles h2 { padding-right: 24px; }
.stack { display: flex; flex-direction: column; gap: 15px; padding-top: 6px; }
.big { display: flex; flex-direction: column; align-items: center; line-height: 24px; padding-top: 6px; font-size: 16px; flex: 1; }
.g-clip .big { flex: none; width: 44px; gap: 6px; }
.g-font { width: 466px; }
.g-font .tools { display: flex; flex-direction: column; gap: 11px; padding: 12px 0 0 12px; }
.g-para { width: 288px; }
.g-para .tools { display: flex; flex-direction: column; gap: 3px; padding-left: 12px; }
.row { display: grid; align-items: center; justify-items: start; height: 36px; }
.sep { width: 1px; height: 36px; background: #5c5c5c; }
.f1 { grid-template-columns: 190px 74px 42px 29px 11px 31px 25px 10px 24px; }
.f2 { grid-template-columns: 39px 38px 29px 26px 45px 39px 27px 11px 32px 31px 35px 26px 35px 10px; padding-left: 12px; }
.p1 { grid-template-columns: 35px 26px 35px 26px 32px 25px 11px 39px 24px; padding-left: 6px; }
.p2 { grid-template-columns: 46px 39px 39px 32px 10px 32px 10px; }
.p3 { grid-template-columns: 35px 26px 35px 21px 9px 33px 15px 16px; padding-left: 6px; }
.combo { display: grid; align-items: center; height: 36px; border: 1px solid #5c5c5c; border-radius: 6px; }
.combo select { appearance: none; grid-area: 1 / 1; height: 34px; padding-left: 2px; outline: 0; }
.combo svg { grid-area: 1 / 1; justify-self: end; margin-right: 3px; pointer-events: none; }
.name { width: 187px; }
.size { width: 64px; }
.glyph { color: #ccc; font-size: 18px; line-height: 28px; }
.aa { font-size: 20px; }
.b { font-weight: 700; }
.it { font-family: "Liberation Serif", serif; font-style: italic; font-size: 22px; }
.u { text-decoration: underline; text-underline-offset: 4px; }
.st { text-decoration: line-through; }
.x { font-weight: 600; }
.x sub, .x sup { font-size: 11px; line-height: 0; color: #3a96dd; }
.num { fill: #3a96dd; font-family: "Liberation Sans", sans-serif; font-size: 8px; font-weight: 700; }
.pressed { display: grid; place-items: center; width: 36px; height: 36px; border: 1px solid #aaa; border-radius: 6px; background: #383838; }

.g-styles { flex: 1 1 541px; }
.gallery {
  display: flex;
  gap: 12px;
  height: 91px;
  margin: 11px 14px 0 13px;
  padding-left: 7px;
  border: 1px solid #666;
  border-radius: 6px;
  background: #444;
  overflow: hidden;
}
.card { flex: 1 1 150px; height: 72px; margin-top: 8px; background: #fff; white-space: nowrap; }
.emphasis { color: #000; font-style: italic; font-size: 21px; }
.h1, .h2 { color: #2f5b93; font-family: "Liberation Serif", serif; }
.h1 { font-size: 33px; }
.h2 { font-size: 27px; }
.scroll { display: flex; flex-direction: column; flex: 0 0 23px; margin-left: -5px; border-left: 1px solid #666; background: #292929; }
.scroll button { display: grid; place-items: center; flex: 1; }
.scroll button + button { border-top: 2px solid #666; }

.g-edit { width: 80px; }
.g-side { width: 86px; }
.editing { padding-top: 12px; justify-content: flex-start; }
.editing span { padding: 17px 0 8px; }
.g-side .big { justify-content: flex-start; white-space: nowrap; }
.g-side .big svg { margin-bottom: 4px; }
.g-side h2 { font-size: 14px; }
.collapse { width: 50px; display: grid; place-items: end center; padding-bottom: 7px; }

/* document */
main { flex: 1; min-height: 0; overflow: hidden; display: flex; justify-content: center; padding-right: 27px; }
.page { width: 1001px; padding: 0 26px 0 45px; border: solid #8a8a8a; border-width: 0 1px; background: #262626; }
table { width: 100%; table-layout: fixed; border-collapse: collapse; font-family: Lato, "Open Sans", sans-serif; font-size: 14px; line-height: 18px; }
th, td { vertical-align: top; padding: 0 7px; }
td { text-align: left; }
thead th { width: 142px; height: 27px; padding-top: 3px; font-size: 16px; text-align: left; }
thead th + th { width: auto; }
tbody tr { border: solid #5b7db8; border-width: 1px 0; }
tbody th { border-right: 1px solid #5b7db8; }
.r-domain, .r-range { background: #3d475a; }
.r-domain { height: 41px; }
.r-domain th { padding-top: 2px; }
.r-graph { height: 327px; }
.r-graph td { padding: 0 25px 3px 10px; }
.r-range { height: 33px; }
.r-inverse { height: 130px; }
.r-dominv { height: 47px; }
.r-rangeinv { height: 36px; }
.graph { width: 100%; height: auto; margin-top: -1px; }
.ticks { font-family: "Liberation Sans", sans-serif; font-size: 9px; fill: #333; text-anchor: middle; stroke: #fff; stroke-width: 3px; paint-order: stroke; }
.ticks .first { text-anchor: start; }

/* status bar */
.statusbar { display: flex; align-items: center; height: 33px; padding: 0 20px 0 11px; gap: 27px; border-top: 1px solid #3a3a3a; background: #141414; font-size: 15px; white-space: nowrap; }
.with-icon { display: flex; align-items: center; gap: 3px; }
.access { margin-left: -4px; }
.push { margin-left: auto; }
.focus { margin-left: 6px; }
.views { display: flex; margin: 0 -24px 0 -12px; align-self: stretch; }
.views button { width: 60px; display: grid; place-items: center; }
.views .on { background: #292929; }
.zoom { display: flex; align-items: center; gap: 8px; margin-left: 5px; }
.zoom > span:last-child { width: 42px; text-align: right; }
.slider { position: relative; width: 148px; height: 20px; }
.slider::before { content: ""; position: absolute; left: 74px; top: 4px; width: 1px; height: 12px; background: #aaa; }
.slider input { appearance: none; display: block; width: 100%; height: 20px; position: relative; }
.slider input::-webkit-slider-runnable-track { height: 2px; background: #aaa; }
.slider input::-webkit-slider-thumb { appearance: none; width: 8px; height: 18px; margin-top: -8px; background: #aaa; }

/* taskbar */
.taskbar { display: grid; grid-template-columns: 1fr auto 1fr; align-items: center; height: 72px; padding-top: 2px; background: #212121; }
.weather { display: flex; align-items: center; gap: 14px; padding-left: 32px; text-align: left; line-height: 24px; justify-self: start; }
.weather small { font-size: 17px; color: #c4c4c4; }
.apps { display: flex; gap: 6px; }
.apps button { position: relative; display: grid; place-items: center; width: 60px; height: 60px; border-radius: 6px; }
.apps button::after { position: absolute; bottom: 1px; left: 26px; width: 9px; height: 5px; border-radius: 3px; }
.apps .red { background: #462829; }
.apps .many { width: 54px; margin-right: 6px; padding-left: 6px; box-shadow: 1px 0 #212121, 7px 0 #3c2829; }
.apps .current { background: #303030; box-shadow: inset 0 1px #444, 1px 0 #212121, 7px 0 #333; }
.apps .red::after { content: ""; background: #ff99a4; }
.apps .running::after { content: ""; background: #999; }
.apps .current::after { content: ""; left: 18px; width: 24px; background: #4cc2ff; }
.tray { display: flex; align-items: center; justify-self: end; padding-right: 29px; }
.net { display: flex; gap: 11px; margin-left: 27px; }
.clock { margin-left: 22px; text-align: right; line-height: 23px; }
```
